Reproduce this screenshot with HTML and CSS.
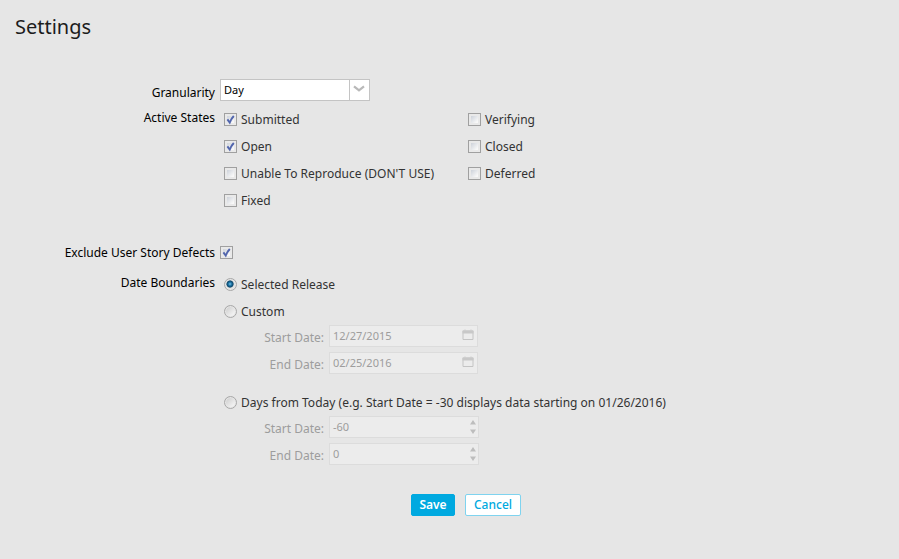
FILE: index.html
```html
<!DOCTYPE html>
<html lang="en">
<head>
<meta charset="utf-8">
<title>Settings</title>
<link rel="stylesheet" href="styles.css">
</head>
<body>
<svg class="defs" aria-hidden="true">
  <symbol id="tick" viewBox="0 0 13 13"><path d="M3.4 6.4 L5.7 9.6 Q7.1 5.9 9.8 3" fill="none" stroke="#5266ad" stroke-width="1.9"/></symbol>
  <symbol id="calendar" viewBox="0 0 12 12"><path d="M1 2h10v8.5H1z" fill="#ececec" stroke="#c4c4c4"/><path d="M.5 1.5h11v3H.5z" fill="#c8c8c8"/><path d="M3 .5v1M9 .5v1" stroke="#c8c8c8"/></symbol>
  <symbol id="spin" viewBox="0 0 6 14"><path d="M3 0l3 4.6H0zM0 9.4h6L3 14z" fill="#bdbdbd"/></symbol>
</svg>
<h1 class="title">Settings</h1>
<form class="settings">
  <div class="row granularity">
    <div class="label">Granularity</div>
    <div class="combo"><span class="value">Day</span><span class="trigger"><svg width="12" height="8" viewBox="0 0 12 8"><path d="M1 1.3 L6 5.4 L11 1.3" fill="none" stroke="#b9b9b9" stroke-width="2.2"/></svg></span></div>
  </div>
  <div class="row states">
    <div class="label">Active States</div>
    <div class="columns">
      <div class="column">
        <div class="option"><span class="check"><svg><use href="#tick"/></svg></span><span class="text">Submitted</span></div>
        <div class="option"><span class="check"><svg><use href="#tick"/></svg></span><span class="text">Open</span></div>
        <div class="option"><span class="check"></span><span class="text">Unable To Reproduce (DON'T USE)</span></div>
        <div class="option"><span class="check"></span><span class="text">Fixed</span></div>
      </div>
      <div class="column">
        <div class="option"><span class="check"></span><span class="text">Verifying</span></div>
        <div class="option"><span class="check"></span><span class="text">Closed</span></div>
        <div class="option"><span class="check"></span><span class="text">Deferred</span></div>
      </div>
    </div>
  </div>
  <div class="row exclude">
    <div class="label">Exclude User Story Defects</div>
    <span class="check"><svg><use href="#tick"/></svg></span>
  </div>
  <div class="row boundaries">
    <div class="label">Date Boundaries</div>
    <div class="choices">
      <div class="option"><span class="radio selected"></span><span class="text">Selected Release</span></div>
      <div class="option"><span class="radio"></span><span class="text">Custom</span></div>
      <div class="field"><span class="field-label">Start Date:</span><div class="input date"><span>12/27/2015</span><svg class="calendar"><use href="#calendar"/></svg></div></div>
      <div class="field"><span class="field-label">End Date:</span><div class="input date"><span>02/25/2016</span><svg class="calendar"><use href="#calendar"/></svg></div></div>
      <div class="option days"><span class="radio"></span><span class="text">Days from Today (e.g. Start Date = -30 displays data starting on 01/26/2016)</span></div>
      <div class="field"><span class="field-label">Start Date:</span><div class="input number"><span>-60</span><svg class="spin"><use href="#spin"/></svg></div></div>
      <div class="field"><span class="field-label">End Date:</span><div class="input number"><span>0</span><svg class="spin"><use href="#spin"/></svg></div></div>
    </div>
  </div>
  <div class="buttons">
    <button class="button save" type="button">Save</button>
    <button class="button cancel" type="button">Cancel</button>
  </div>
</form>
</body>
</html>
```
FILE: styles.css
```css
* { box-sizing: border-box; }
body {
  margin: 0;
  height: 559px;
  overflow: hidden;
  background: #e6e6e6;
  color: #000;
  font: 12px/18px "Noto Sans", sans-serif;
}
.defs { display: none; }
.title {
  margin: 0;
  padding: 13px 15px 0;
  height: 79px;
  color: #1c1c1c;
  font-size: 20px;
  line-height: 28px;
  font-weight: 400;
}
.row { display: flex; align-items: flex-start; gap: 5px; }
.label { width: 215px; text-align: right; white-space: nowrap; }
.granularity { height: 27px; }
.granularity .label { padding-top: 5px; }
.combo {
  display: flex;
  width: 150px;
  height: 22px;
  background: #fff;
  border: 1px solid #c4c4c4;
}
.value { flex: 1; padding: 1px 3px; font-size: 11px; }
.trigger {
  display: flex;
  justify-content: center;
  width: 20px;
  padding: 5px 2px 0 0;
  border-left: 1px solid #c4c4c4;
}
.states { height: 137px; }
.states .label { padding-top: 3px; }
.columns { display: flex; padding-left: 4px; }
.column { width: 244px; }
.option { display: flex; align-items: center; gap: 4px; height: 27px; color: #333; letter-spacing: 0.01px; white-space: nowrap; }
.check {
  flex: none;
  width: 13px;
  height: 13px;
  border: 1px solid #a0a0a0;
  background: linear-gradient(135deg, #cdd2da, #f8f8f8 85%) 2px 2px / 7px 7px no-repeat, #e9e9e9;
}
.check svg { display: block; width: 13px; height: 13px; margin: -1px; }
.exclude { height: 28px; padding-top: 1px; }
.exclude .check { margin-top: 2px; }
.radio {
  flex: none;
  width: 13px;
  height: 13px;
  border: 1px solid #a8a8a8;
  border-radius: 50%;
  background: linear-gradient(135deg, #c8c8c8, #f4f4f4 80%);
  box-shadow: inset 0 0 0 1px #e6e6e6;
}
.radio.selected {
  background: radial-gradient(circle at 5px 5px, #75c7ec 0, #1a6e9f 1.8px, #0e4668 3.2px, transparent 4px), #e2e2e2;
}
.boundaries .label { padding-top: 3px; }
.choices { padding-left: 4px; }
.field { display: flex; gap: 5px; height: 27px; color: #9d9d9d; }
.field-label { width: 100px; padding-top: 4px; text-align: right; }
.input {
  display: flex;
  justify-content: space-between;
  height: 22px;
  padding: 1px 3px;
  border: 1px solid #dcdcdc;
  background: #ececec;
  line-height: 18px;
}
.date { width: 149px; font-size: 11px; }
.number { width: 150px; font-size: 11px; }
.calendar { width: 12px; height: 12px; margin-top: 2px; }
.spin { width: 6px; height: 14px; margin-top: 2px; margin-right: -1px; }
.days { margin-top: 10px; }
.buttons { display: flex; gap: 10px; padding: 24px 0 0 411px; }
.button {
  height: 22px;
  padding: 0;
  border: 1px solid #00a9e0;
  border-radius: 2px;
  font: 600 12px/18px "Noto Sans", sans-serif;
}
.save { width: 44px; background: #00a9e0; color: #fff; }
.cancel { width: 56px; border-color: #7fd3ef; background: #fff; color: #00a9e0; font-weight: 500; }
```
